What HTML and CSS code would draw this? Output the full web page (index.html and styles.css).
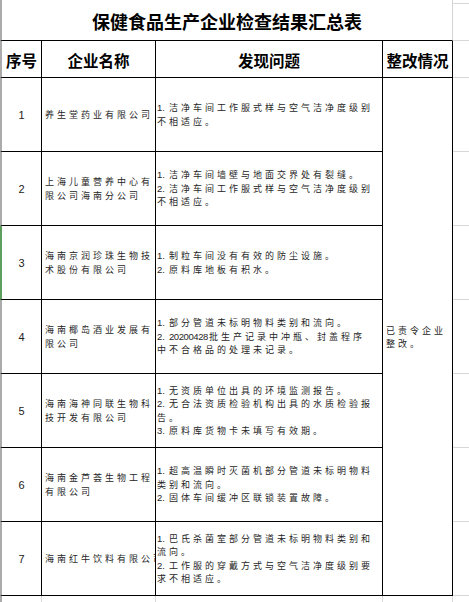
FILE: index.html
```html
<!DOCTYPE html>
<html lang="zh-CN">
<head>
<meta charset="utf-8">
<title>保健食品生产企业检查结果汇总表</title>
<link rel="stylesheet" href="styles.css">
</head>
<body>
<div class="sheet">
  <div class="title">保健食品生产企业检查结果汇总表</div>
  <div class="fill fill-top"></div>

  <div class="cell h c1">序号</div>
  <div class="cell h c2">企业名称</div>
  <div class="cell h c3">发现问题</div>
  <div class="cell h c4">整改情况</div>
  <div class="fill"></div>

  <div class="cell c1 num">1</div>
  <div class="cell c2 txt"><div class="in">养生堂药业有限公司</div></div>
  <div class="cell c3 txt"><div class="in"><span class="n">1.</span>洁净车间工作服式样与空气洁净度级别<br>不相适应。</div></div>
  <div class="cell merged txt"><div class="in">已责令企业<br>整改。</div></div>
  <div class="fill"></div>

  <div class="cell c1 num">2</div>
  <div class="cell c2 txt"><div class="in">上海儿童营养中心有<br>限公司海南分公司</div></div>
  <div class="cell c3 txt"><div class="in"><span class="n">1.</span>洁净车间墙壁与地面交界处有裂缝。<br><span class="n">2.</span>洁净车间工作服式样与空气洁净度级别<br>不相适应。</div></div>
  <div class="fill"></div>

  <div class="cell c1 num sel">3</div>
  <div class="cell c2 txt"><div class="in">海南京润珍珠生物技<br>术股份有限公司</div></div>
  <div class="cell c3 txt"><div class="in"><span class="n">1.</span>制粒车间没有有效的防尘设施。<br><span class="n">2.</span>原料库地板有积水。</div></div>
  <div class="fill"></div>

  <div class="cell c1 num">4</div>
  <div class="cell c2 txt"><div class="in">海南椰岛酒业发展有<br>限公司</div></div>
  <div class="cell c3 txt"><div class="in"><span class="n">1.</span>部分管道未标明物料类别和流向。<br><span class="n">2.</span><span class="d">20200428</span>批生产记录中冲瓶、封盖程序<br>中不合格品的处理未记录。</div></div>
  <div class="fill"></div>

  <div class="cell c1 num">5</div>
  <div class="cell c2 txt"><div class="in">海南海神同联生物科<br>技开发有限公司</div></div>
  <div class="cell c3 txt"><div class="in"><span class="n">1.</span>无资质单位出具的环境监测报告。<br><span class="n">2.</span>无合法资质检验机构出具的水质检验报<br>告。<br><span class="n">3.</span>原料库货物卡未填写有效期。</div></div>
  <div class="fill"></div>

  <div class="cell c1 num">6</div>
  <div class="cell c2 txt"><div class="in">海南金芦荟生物工程<br>有限公司</div></div>
  <div class="cell c3 txt"><div class="in"><span class="n">1.</span>超高温瞬时灭菌机部分管道未标明物料<br>类别和流向。<br><span class="n">2.</span>固体车间缓冲区联锁装置故障。</div></div>
  <div class="fill"></div>

  <div class="cell c1 num">7</div>
  <div class="cell c2 txt"><div class="in">海南红牛饮料有限公司</div></div>
  <div class="cell c3 txt"><div class="in"><span class="n">1.</span>巴氏杀菌室部分管道未标明物料类别和<br>流向。<br><span class="n">2.</span>工作服的穿戴方式与空气洁净度级别要<br>求不相适应。</div></div>
  <div class="fill"></div>

  <div class="grid g1"></div>
  <div class="grid"></div>
  <div class="grid"></div>
  <div class="grid"></div>
  <div class="fill-none"></div>
</div>
</body>
</html>
```

FILE: styles.css
```css
html, body {
  margin: 0;
  padding: 0;
  background: #ffffff;
}

.sheet {
  width: 469px;
  height: 602px;
  overflow: hidden;
  display: grid;
  grid-template-columns: 42px 114px 227px 70px 1fr;
  grid-template-rows: 41px 37px repeat(7, 74px) 30px;
  font-family: "Liberation Sans", "Noto Sans CJK SC", sans-serif;
  color: #1e1e1e;
}

.sheet > div {
  box-sizing: border-box;
  min-width: 0;
}

.title {
  grid-column: 1 / 5;
  border-left: 2px solid #ababab;
  border-right: 1px solid #d4d4d4;
  border-bottom: 1px solid #000;
  display: flex;
  align-items: center;
  justify-content: center;
  padding-top: 2px;
  font-family: "Noto Sans CJK SC", sans-serif;
  font-weight: bold;
  font-size: 18px;
  color: #000;
}

.fill {
  grid-column: 5;
  border-bottom: 1px solid #d8d8d8;
}

.fill-top {
  background: linear-gradient(#fff 3px, #d8d8d8 3px, #d8d8d8 4px, #fff 4px);
}

.cell {
  border-right: 1px solid #000;
  border-bottom: 1px solid #000;
  display: flex;
  align-items: center;
  overflow: hidden;
  white-space: nowrap;
}

.in {
  min-width: 0;
}

.c1 {
  grid-column: 1;
  border-left: 2px solid #ababab;
  justify-content: center;
}

.c2 { grid-column: 2; }
.c3 { grid-column: 3; }
.c4 { grid-column: 4; }

.sel {
  border-left-color: #5d9e5d;
}

.h {
  justify-content: center;
  font-family: "Noto Sans CJK SC", sans-serif;
  font-weight: bold;
  font-size: 15.5px;
  color: #000;
  padding-top: 1px;
}

.num {
  font-family: "Liberation Sans", sans-serif;
  font-size: 11px;
  color: #222;
}

.txt {
  font-family: "Noto Sans CJK SC", sans-serif;
  font-size: 9px;
  letter-spacing: 3px;
  line-height: 13.5px;
  color: #262626;
}

.c2.txt {
  padding-left: 3px;
}

.c3.txt {
  padding-left: 1px;
}

.merged {
  grid-column: 4;
  grid-row: 3 / span 7;
  padding-left: 3px;
  line-height: 13px;
}

.n {
  font-family: "Liberation Sans", sans-serif;
  font-size: 9.5px;
  letter-spacing: 0;
  margin-right: 4px;
}

.d {
  font-family: "Liberation Sans", sans-serif;
  font-size: 9.5px;
  letter-spacing: -0.4px;
  margin-right: 1px;
}

.grid {
  border-right: 1px solid #d8d8d8;
}

.g1 {
  border-left: 2px solid #ababab;
}

.fill-none {
  grid-column: 5;
}
```
